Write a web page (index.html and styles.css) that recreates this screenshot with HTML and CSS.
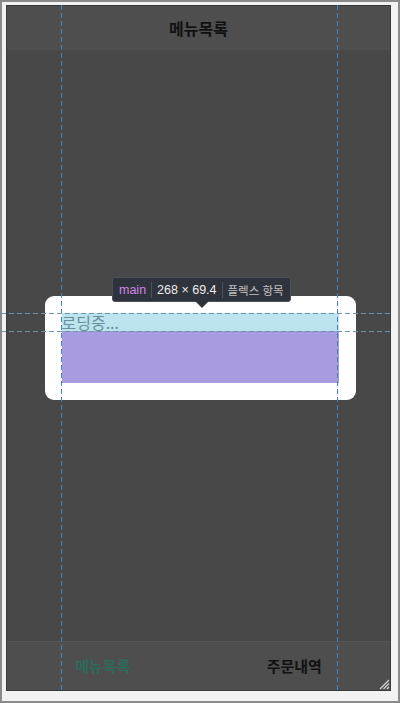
FILE: index.html
```html
<!DOCTYPE html>
<html lang="ko">
<head>
<meta charset="utf-8">
<link rel="stylesheet" href="styles.css">
</head>
<body>
<div class="frame">
  <div class="screen">
    <header class="topbar">메뉴목록</header>
    <div class="content">
      <div class="modal">
        <main class="main">
          <div class="loading">로딩중...</div>
          <div class="fill"></div>
        </main>
      </div>
    </div>
    <nav class="tabbar">
      <div class="tab tab-active">메뉴목록</div>
      <div class="tab">주문내역</div>
    </nav>

    <div class="guide-v guide-left"></div>
    <div class="guide-v guide-right"></div>
    <div class="guide-h guide-top"></div>
    <div class="guide-h guide-mid"></div>

    <div class="tooltip">
      <span class="tip-tag">main</span>
      <span class="tip-sep"></span>
      <span class="tip-size">268 × 69.4</span>
      <span class="tip-sep"></span>
      <span class="tip-kind">플렉스 항목</span>
      <span class="tip-arrow"></span>
    </div>

    <svg class="grip" width="12" height="12" viewBox="0 0 12 12">
      <path d="M11 2 L2 11 M11 5.5 L5.5 11 M11 9 L9 11" stroke="#d8d8d8" stroke-width="1.2" fill="none"/>
    </svg>
  </div>
</div>
</body>
</html>
```

FILE: styles.css
```css
html, body {
  margin: 0;
  padding: 0;
}
body {
  width: 400px;
  height: 703px;
  overflow: hidden;
  font-family: "Noto Sans CJK KR", "Noto Sans", sans-serif;
}
.frame {
  box-sizing: border-box;
  width: 400px;
  height: 703px;
  border: 2px solid #8a8a8a;
  background: #f2f2f2;
  padding: 3px 7px 10px 4px;
}
.screen {
  position: relative;
  box-sizing: border-box;
  height: 100%;
  border: 1px solid #3a3a3a;
  background: #484848;
  display: flex;
  flex-direction: column;
}
.topbar {
  height: 44px;
  flex: none;
  background: #4e4e4e;
  color: #111;
  font-weight: 700;
  font-size: 16px;
  display: flex;
  align-items: center;
  justify-content: center;
}
.content {
  flex: 1;
  display: flex;
  align-items: center;
  justify-content: center;
  padding-top: 4px;
}
.modal {
  box-sizing: border-box;
  width: 311px;
  background: #fff;
  border-radius: 9px;
  padding: 17px;
  margin-left: 3px;
}
.main {
  height: 70px;
  display: flex;
  flex-direction: column;
}
.loading {
  height: 18px;
  background: #bce3ee;
  color: #6b8f9a;
  font-size: 16px;
  line-height: 18px;
}
.fill {
  flex: 1;
  background: #a89be0;
}
.tabbar {
  height: 48px;
  flex: none;
  background: #4e4e4e;
  border-top: 1px solid #555;
  display: flex;
  align-items: center;
}
.tab {
  flex: 1;
  text-align: center;
  font-size: 15px;
  font-weight: 700;
  color: #111;
  padding-bottom: 2px;
}
.tab-active {
  color: #2d6a5c;
}
.guide-v {
  position: absolute;
  top: -1px;
  bottom: -1px;
  width: 1px;
  background-image: repeating-linear-gradient(to bottom, #3f84cc 0 5px, transparent 5px 8px);
}
.guide-left { left: 54px; }
.guide-right { left: 330px; }
.guide-h {
  position: absolute;
  left: -6px;
  right: -1px;
  height: 1px;
  background-image: repeating-linear-gradient(to right, #6a94ae 0 5px, transparent 5px 8px);
}
.guide-top { top: 307px; }
.guide-mid { top: 325px; }
.tooltip {
  position: absolute;
  left: 105px;
  top: 271px;
  height: 25px;
  box-sizing: border-box;
  background: #2f333b;
  border: 1px solid #4a4f58;
  border-radius: 3px;
  display: flex;
  align-items: center;
  padding: 0 6px;
  gap: 5px;
  font-family: "Liberation Sans", "Noto Sans CJK KR", sans-serif;
  font-size: 12.5px;
  white-space: nowrap;
}
.tip-tag { color: #cf86ea; }
.tip-size { color: #ececec; }
.tip-kind {
  color: #c2c2c2;
  font-family: "Noto Sans CJK KR", sans-serif;
  font-size: 11.5px;
}
.tip-sep {
  width: 1px;
  height: 16px;
  background: #4d525b;
}
.tip-arrow {
  position: absolute;
  left: 82px;
  bottom: -7px;
  width: 0;
  height: 0;
  border-left: 7px solid transparent;
  border-right: 7px solid transparent;
  border-top: 7px solid #2f333b;
}
.grip {
  position: absolute;
  right: 0;
  bottom: 0;
}
```
